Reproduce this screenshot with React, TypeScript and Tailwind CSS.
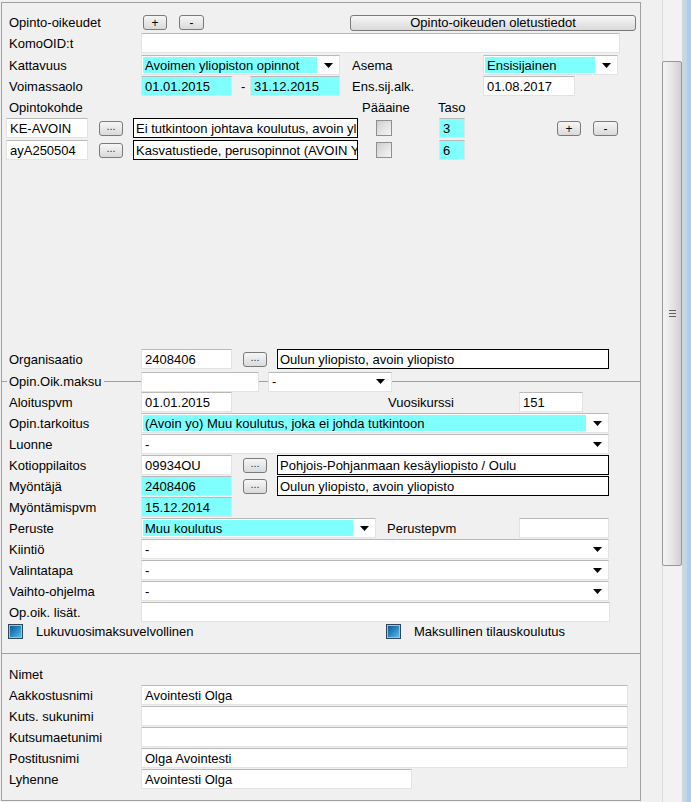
import React from "react";

const CYAN = "bg-[#80ffff]";

function Arrow() {
  return (
    <svg width="9" height="5" viewBox="0 0 9 5">
      <polygon points="0,0 9,0 4.5,5" fill="#000" />
    </svg>
  );
}

function TextInput({ className = "", value = "", cyan = false }: { className?: string; value?: string; cyan?: boolean }) {
  return (
    <div
      className={`h-[20px] shrink-0 border border-[#e3e3e3] border-t-[#b9b9b9] flex items-center pl-[3px] pt-px overflow-hidden whitespace-nowrap ${
        cyan ? CYAN : "bg-white"
      } ${className}`}
    >
      {value}
    </div>
  );
}

function Select({ className = "", value = "", cyan = false }: { className?: string; value?: string; cyan?: boolean }) {
  return (
    <div className={`h-[20px] shrink-0 bg-white border border-[#e3e3e3] border-t-[#b9b9b9] flex ${className}`}>
      <div className={`flex-1 flex items-center pl-[2px] pt-px m-px whitespace-nowrap overflow-hidden ${cyan ? CYAN : ""}`}>{value}</div>
      <div className="w-[21px] flex items-center justify-center">
        <Arrow />
      </div>
    </div>
  );
}

function DescBox({ className = "", value = "" }: { className?: string; value?: string }) {
  return (
    <div className={`h-[20px] shrink-0 border border-black bg-white pl-[2px] pt-px flex items-center overflow-hidden whitespace-nowrap ${className}`}>
      {value}
    </div>
  );
}

function Btn({ className = "", children }: { className?: string; children: React.ReactNode }) {
  return (
    <div
      className={`shrink-0 border border-[#7a7a7a] rounded-[3px] bg-linear-to-b from-[#f6f6f6] to-[#dadada] flex items-center justify-center leading-none ${className}`}
    >
      {children}
    </div>
  );
}

function Dots({ className = "" }: { className?: string }) {
  return (
    <Btn className={`w-[24px] h-[15px] mt-[3px] text-[11px] !items-end pb-[3px] text-[#333] ${className}`}>...</Btn>
  );
}

function GrayCheck({ className = "" }: { className?: string }) {
  return (
    <div className={`w-[16px] h-[16px] shrink-0 border border-[#8f8f8f] bg-linear-to-br from-[#cdcdcd] to-[#f6f6f6] p-[2px] ${className}`}>
      <div className="w-full h-full bg-linear-to-br from-[#d6d6d6] to-[#f0f0f0]" />
    </div>
  );
}

function BlueCheck({ className = "" }: { className?: string }) {
  return (
    <div className={`w-[15px] h-[15px] shrink-0 border border-[#2e4658] p-px bg-[#9fc3d8] ${className}`}>
      <div className="w-full h-full bg-linear-to-br from-[#145a92] via-[#2a86c0] to-[#56bde8]" />
    </div>
  );
}

function L({ children, className = "" }: { children?: React.ReactNode; className?: string }) {
  return <div className={`w-[139px] shrink-0 pl-[7px] pt-px leading-[20px] whitespace-nowrap ${className}`}>{children}</div>;
}

export default function App() {
  return (
    <div
      className="w-[691px] h-[802px] bg-[#f0f0f0] text-[13px] text-black flex overflow-hidden"
      style={{ fontFamily: '"Liberation Sans", Arial, sans-serif' }}
    >
      {/* main panel */}
      <div className="ml-px mt-[2px] w-[640px] h-[799px] border border-[#a0a0a0] flex flex-col shrink-0">
        {/* Row 1 */}
        <div className="flex items-center h-[21px] mt-[9px]">
          <div className="w-[139px] shrink-0 pl-[7px] pt-px whitespace-nowrap">Opinto-oikeudet</div>
          <Btn className="w-[24px] h-[15px] ml-[2px] text-[12px]">+</Btn>
          <Btn className="ml-[12px] w-[25px] h-[15px] text-[12px]">-</Btn>
          <Btn className="ml-[146px] w-[286px] h-[16px]">Opinto-oikeuden oletustiedot</Btn>
        </div>
        {/* Row 2 */}
        <div className="flex items-start h-[22px]">
          <L>KomoOID:t</L>
          <TextInput className="w-[479px]" />
        </div>
        {/* Row 3 */}
        <div className="flex items-start h-[21px]">
          <L>Kattavuus</L>
          <Select className="w-[199px]" value="Avoimen yliopiston opinnot" cyan />
          <div className="ml-[12px] w-[131px] pt-px leading-[20px]">Asema</div>
          <Select className="w-[135px]" value="Ensisijainen" cyan />
        </div>
        {/* Row 4 */}
        <div className="flex items-start h-[21px]">
          <L>Voimassaolo</L>
          <TextInput className="w-[91px]" value="01.01.2015" cyan />
          <div className="w-[18px] pl-[9px] pt-px leading-[20px]">-</div>
          <TextInput className="w-[90px]" value="31.12.2015" cyan />
          <div className="ml-[12px] w-[131px] pt-px leading-[20px]">Ens.sij.alk.</div>
          <TextInput className="w-[92px]" value="01.08.2017" />
        </div>
        {/* Row 5 */}
        <div className="flex items-start h-[21px]">
          <L>Opintokohde</L>
          <div className="ml-[221px] w-[76px] pt-px leading-[20px]">Pääaine</div>
          <div className="pt-px leading-[20px]">Taso</div>
        </div>
        {/* Row 6 */}
        <div className="flex items-start h-[22px]">
          <TextInput className="ml-[4px] w-[82px]" value="KE-AVOIN" />
          <Dots className="ml-[11px]" />
          <DescBox className="ml-[10px] w-[225px]" value="Ei tutkintoon johtava koulutus, avoin yliopisto" />
          <GrayCheck className="ml-[18px] mt-[2px]" />
          <TextInput className="ml-[47px] w-[26px]" value="3" cyan />
          <Btn className="ml-[92px] mt-[3px] w-[24px] h-[15px] text-[12px]">+</Btn>
          <Btn className="ml-[12px] mt-[3px] w-[25px] h-[15px] text-[12px]">-</Btn>
        </div>
        {/* Row 7 */}
        <div className="flex items-start h-[21px]">
          <TextInput className="ml-[4px] w-[82px]" value="ayA250504" />
          <Dots className="ml-[11px]" />
          <DescBox className="ml-[10px] w-[225px]" value="Kasvatustiede, perusopinnot (AVOIN YO)" />
          <GrayCheck className="ml-[18px] mt-[2px]" />
          <TextInput className="ml-[47px] w-[26px]" value="6" cyan />
        </div>

        <div className="h-[188px] shrink-0" />

        {/* Organisaatio */}
        <div className="flex items-start h-[22px]">
          <L>Organisaatio</L>
          <TextInput className="w-[91px]" value="2408406" />
          <Dots className="ml-[11px]" />
          <DescBox className="ml-[10px] w-[332px]" value="Oulun yliopisto, avoin yliopisto" />
        </div>
        {/* Opin.Oik.maksu fieldset line */}
        <div className="flex items-center h-[21px]">
          <div className="w-[139px] shrink-0 flex items-center">
            <div className="w-[5px] h-px bg-[#a0a0a0]" />
            <span className="ml-[2px] mr-[3px] pt-px whitespace-nowrap">Opin.Oik.maksu</span>
            <div className="flex-1 h-px bg-[#a0a0a0]" />
          </div>
          <TextInput className="w-[118px]" />
          <div className="w-[9px] h-px bg-[#a0a0a0]" />
          <Select className="w-[124px]" value="-" />
          <div className="flex-1 h-px bg-[#a0a0a0]" />
        </div>
        {/* Aloituspvm */}
        <div className="flex items-start h-[21px]">
          <L>Aloituspvm</L>
          <TextInput className="w-[91px]" value="01.01.2015" />
          <div className="ml-[156px] w-[131px] pt-px leading-[20px]">Vuosikurssi</div>
          <TextInput className="w-[64px]" value="151" />
        </div>
        <div className="flex items-start h-[21px]">
          <L>Opin.tarkoitus</L>
          <Select className="w-[468px]" value="(Avoin yo) Muu koulutus, joka ei johda tutkintoon" cyan />
        </div>
        <div className="flex items-start h-[21px]">
          <L>Luonne</L>
          <Select className="w-[468px]" value="-" />
        </div>
        <div className="flex items-start h-[21px]">
          <L>Kotioppilaitos</L>
          <TextInput className="w-[91px]" value="09934OU" />
          <Dots className="ml-[11px]" />
          <DescBox className="ml-[10px] w-[332px]" value="Pohjois-Pohjanmaan kesäyliopisto / Oulu" />
        </div>
        <div className="flex items-start h-[21px]">
          <L>Myöntäjä</L>
          <TextInput className="w-[91px]" value="2408406" cyan />
          <Dots className="ml-[11px]" />
          <DescBox className="ml-[10px] w-[332px]" value="Oulun yliopisto, avoin yliopisto" />
        </div>
        <div className="flex items-start h-[21px]">
          <L>Myöntämispvm</L>
          <TextInput className="w-[91px]" value="15.12.2014" cyan />
        </div>
        <div className="flex items-start h-[21px]">
          <L>Peruste</L>
          <Select className="w-[235px]" value="Muu koulutus" cyan />
          <div className="ml-[11px] w-[132px] pt-px leading-[20px]">Perustepvm</div>
          <TextInput className="w-[90px]" />
        </div>
        <div className="flex items-start h-[21px]">
          <L>Kiintiö</L>
          <Select className="w-[468px]" value="-" />
        </div>
        <div className="flex items-start h-[21px]">
          <L>Valintatapa</L>
          <Select className="w-[468px]" value="-" />
        </div>
        <div className="flex items-start h-[21px]">
          <L>Vaihto-ohjelma</L>
          <Select className="w-[468px]" value="-" />
        </div>
        <div className="flex items-start h-[21px]">
          <L>Op.oik. lisät.</L>
          <TextInput className="w-[469px]" />
        </div>
        {/* checkboxes */}
        <div className="flex items-center h-[17px]">
          <div className="w-[384px] shrink-0 flex items-center">
            <BlueCheck className="ml-[6px]" />
            <span className="ml-[13px] pt-px">Lukuvuosimaksuvelvollinen</span>
          </div>
          <BlueCheck />
          <span className="ml-[13px] pt-px">Maksullinen tilauskoulutus</span>
        </div>

        {/* Nimet section */}
        <div className="mt-[13px] border-t border-[#a0a0a0] pt-[10px] flex flex-col flex-1">
          <div className="flex items-start h-[21px]">
            <L>Nimet</L>
          </div>
          <div className="flex items-start h-[21px]">
            <L>Aakkostusnimi</L>
            <TextInput className="w-[487px]" value="Avointesti Olga" />
          </div>
          <div className="flex items-start h-[21px]">
            <L>Kuts. sukunimi</L>
            <TextInput className="w-[487px]" />
          </div>
          <div className="flex items-start h-[21px]">
            <L>Kutsumaetunimi</L>
            <TextInput className="w-[487px]" />
          </div>
          <div className="flex items-start h-[21px]">
            <L>Postitusnimi</L>
            <TextInput className="w-[487px]" value="Olga Avointesti" />
          </div>
          <div className="flex items-start h-[21px]">
            <L>Lyhenne</L>
            <TextInput className="w-[271px]" value="Avointesti Olga" />
          </div>
        </div>
      </div>

      {/* gap */}
      <div className="w-[21px] shrink-0" />

      {/* scrollbar */}
      <div className="w-[20px] shrink-0 h-full bg-[#f2f2f2] border-l border-[#dcdcdc] flex flex-col">
        <div className="mt-[61px] h-[505px] w-[20px] -ml-px border border-[#979797] rounded-[2px] bg-linear-to-r from-[#f4f4f4] via-[#e6e6e6] to-[#d0d0d0] flex items-center justify-center">
          <div className="flex flex-col gap-[2px]">
            <div className="w-[7px] h-px bg-[#5f5f5f]" />
            <div className="w-[7px] h-px bg-[#5f5f5f]" />
            <div className="w-[7px] h-px bg-[#5f5f5f]" />
          </div>
        </div>
      </div>

      {/* window frame */}
      <div className="w-px shrink-0 h-full bg-[#d6d6d6]" />
      <div className="w-[4px] shrink-0 h-full bg-[#c4d6ea]" />
      <div className="w-[4px] shrink-0 h-full bg-[#aacdf0]" />
      <div className="w-px shrink-0 h-full bg-[#6fb2ea]" />
    </div>
  );
}
